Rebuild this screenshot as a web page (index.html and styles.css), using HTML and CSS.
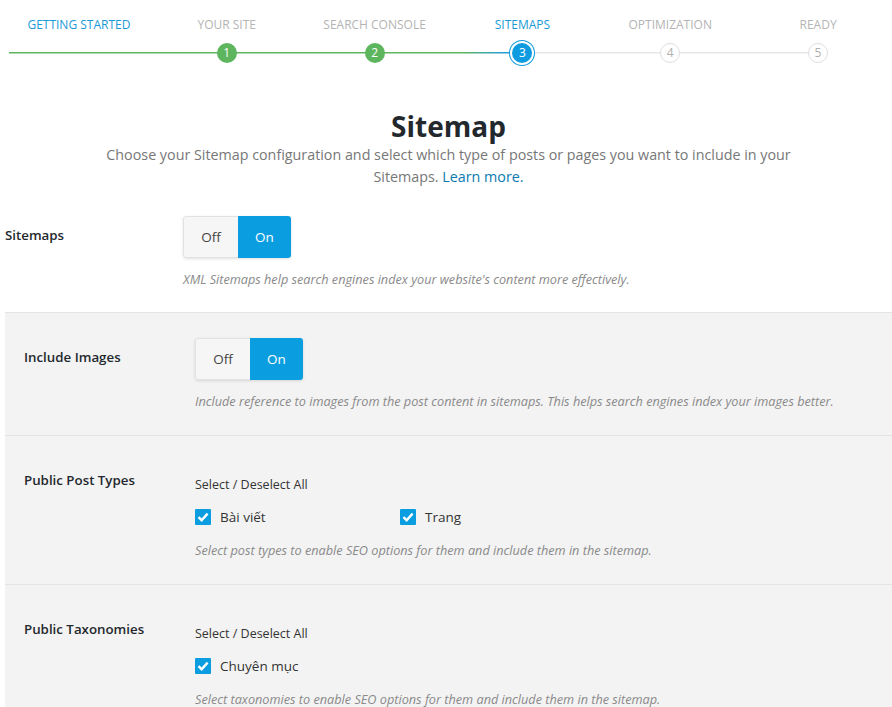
FILE: index.html
```html
<!DOCTYPE html>
<html>
<head>
<meta charset="utf-8">
<link rel="stylesheet" href="styles.css">
</head>
<body>
<div class="page">
  <div class="steps">
    <div class="labels">
      <div class="step active">Getting Started</div>
      <div class="step">Your Site</div>
      <div class="step">Search Console</div>
      <div class="step active">Sitemaps</div>
      <div class="step">Optimization</div>
      <div class="step">Ready</div>
    </div>
    <div class="track">
      <div class="cell"></div>
      <div class="cell"><span class="dot done">1</span></div>
      <div class="cell"><span class="dot done">2</span></div>
      <div class="cell"><span class="dot current">3</span></div>
      <div class="cell"><span class="dot todo">4</span></div>
      <div class="cell"><span class="dot todo">5</span></div>
    </div>
  </div>

  <div class="intro">
    <h1>Sitemap</h1>
    <p>Choose your Sitemap configuration and select which type of posts or pages you want to include in your<br>Sitemaps. <a href="#">Learn more.</a></p>
  </div>

  <div class="row first">
    <div class="label">Sitemaps</div>
    <div class="control">
      <div class="toggle"><span class="off">Off</span><span class="on">On</span></div>
      <div class="desc">XML Sitemaps help search engines index your website's content more effectively.</div>
    </div>
  </div>

  <div class="row gray">
    <div class="label">Include Images</div>
    <div class="control">
      <div class="toggle"><span class="off">Off</span><span class="on">On</span></div>
      <div class="desc">Include reference to images from the post content in sitemaps. This helps search engines index your images better.</div>
    </div>
  </div>

  <div class="row gray">
    <div class="label">Public Post Types</div>
    <div class="control">
      <div class="selall">Select / Deselect All</div>
      <div class="checks">
        <label class="check"><span class="box"><svg viewBox="0 0 16 16"><path d="M3.5 8.2 L6.6 11.2 L12.6 4.6" fill="none" stroke="#fff" stroke-width="2.4"/></svg></span>Bài viết</label>
        <label class="check"><span class="box"><svg viewBox="0 0 16 16"><path d="M3.5 8.2 L6.6 11.2 L12.6 4.6" fill="none" stroke="#fff" stroke-width="2.4"/></svg></span>Trang</label>
      </div>
      <div class="desc">Select post types to enable SEO options for them and include them in the sitemap.</div>
    </div>
  </div>

  <div class="row gray">
    <div class="label">Public Taxonomies</div>
    <div class="control">
      <div class="selall">Select / Deselect All</div>
      <div class="checks">
        <label class="check"><span class="box"><svg viewBox="0 0 16 16"><path d="M3.5 8.2 L6.6 11.2 L12.6 4.6" fill="none" stroke="#fff" stroke-width="2.4"/></svg></span>Chuyên mục</label>
      </div>
      <div class="desc">Select taxonomies to enable SEO options for them and include them in the sitemap.</div>
    </div>
  </div>
</div>
</body>
</html>
```

FILE: styles.css
```css
html, body {
  margin: 0;
  padding: 0;
  background: #fff;
}
body {
  font-family: "Open Sans", "Noto Sans", sans-serif;
  color: #23282d;
  overflow: hidden;
}
.page {
  padding-left: 5px;
}
.steps {
  padding-top: 16px;
}
.labels {
  display: flex;
}
.step {
  width: 148px;
  text-align: center;
  font-size: 12px;
  text-transform: uppercase;
  color: #b4b4b4;
  line-height: 18px;
}
.step.active {
  color: #1a9ad6;
}
.track {
  display: flex;
  height: 24px;
  margin-top: 7px;
  background-image: linear-gradient(to right, #5db55d 0, #5db55d 455px, #2f9fce 490px, #0e9be0 510px, #e6e6e6 512px, #e6e6e6 100%);
  background-repeat: no-repeat;
  background-size: 811px 1.5px;
  background-position: 4px 11px;
}
.cell {
  width: 148px;
  display: flex;
  justify-content: center;
  align-items: center;
}
.dot {
  width: 20px;
  height: 20px;
  border-radius: 50%;
  box-sizing: border-box;
  display: flex;
  align-items: center;
  justify-content: center;
  font-size: 12px;
  line-height: 1;
}
.dot.done {
  background: #5db55d;
  color: #fff;
}
.dot.current {
  background: #0e9be0;
  color: #fff;
  box-shadow: 0 0 0 2px #fff, 0 0 0 3px #0e9be0;
}
.dot.todo {
  background: #fff;
  border: 1px solid #dedede;
  color: #b0b0b0;
}
.intro {
  text-align: center;
  padding-top: 44px;
}
.intro h1 {
  margin: 0;
  font-size: 28px;
  font-weight: 700;
  line-height: 34px;
  color: #23282d;
}
.intro p {
  margin: 1px auto 0;
  width: 760px;
  font-size: 14.3px;
  line-height: 22px;
  color: #777;
}
.intro a {
  color: #0a79b0;
  text-decoration: none;
}
.row {
  display: flex;
}
.row.first {
  padding-top: 28px;
  padding-bottom: 24px;
}
.row.first .label {
  width: 178px;
}
.row.gray {
  background: #f3f3f3;
  border-top: 1px solid #e4e4e4;
  padding: 25px 0 25px 19px;
}
.row.gray .label {
  width: 171px;
}
.label {
  font-size: 13.3px;
  font-weight: 600;
  color: #23282d;
  padding-top: 10px;
  flex: none;
}
.toggle {
  display: inline-flex;
  height: 42px;
  border-radius: 3px;
  box-shadow: 0 1px 3px rgba(0,0,0,0.12);
  overflow: hidden;
  font-size: 13.5px;
}
.toggle span {
  display: flex;
  align-items: center;
  justify-content: center;
}
.toggle .off {
  width: 54px;
  background: #f6f6f6;
  color: #444;
  border: 1px solid #e2e2e2;
  border-right: none;
  border-radius: 3px 0 0 3px;
}
.toggle .on {
  width: 53px;
  background: #0a9ee0;
  color: #fff;
}
.desc {
  font-size: 12.7px;
  font-style: italic;
  color: #8a8a8a;
  margin-top: 13px;
  line-height: 17px;
}
.selall {
  font-size: 12.5px;
  color: #333;
  margin-top: 15px;
  line-height: 18px;
}
.checks {
  display: flex;
  margin-top: 14px;
}
.check {
  display: flex;
  align-items: center;
  width: 205px;
  font-size: 13.5px;
  color: #333;
  line-height: 18px;
}
.box {
  width: 16px;
  height: 16px;
  background: #0a9ee0;
  border-radius: 1px;
  margin-right: 9px;
  display: flex;
}
.box svg {
  width: 16px;
  height: 16px;
}
.checks + .desc {
  margin-top: 16px;
}
```
